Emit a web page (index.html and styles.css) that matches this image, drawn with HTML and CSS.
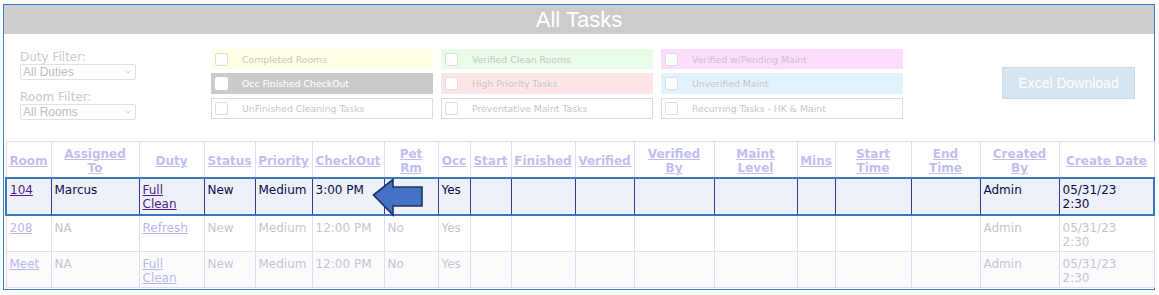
FILE: index.html
```html
<!DOCTYPE html>
<html>
<head>
<meta charset="utf-8">
<title>All Tasks</title>
<link rel="stylesheet" href="styles.css">
</head>
<body>
<div class="panel">
  <div class="title">All Tasks</div>
  <div class="filters">
    <div class="selects">
      <label class="flabel">Duty Filter:</label>
      <div class="sel">
        <select><option>All Duties</option></select>
        <svg class="chev" viewBox="0 0 6 4"><path d="M0.5 0.5 L3 3.2 L5.5 0.5" fill="none" stroke="#c8c8c8" stroke-width="0.9"/></svg>
      </div>
      <label class="flabel second">Room Filter:</label>
      <div class="sel">
        <select><option>All Rooms</option></select>
        <svg class="chev" viewBox="0 0 6 4"><path d="M0.5 0.5 L3 3.2 L5.5 0.5" fill="none" stroke="#c8c8c8" stroke-width="0.9"/></svg>
      </div>
    </div>
    <div class="legend">
      <div class="item yellow"><span class="box"></span>Completed Rooms</div>
      <div class="item green"><span class="box"></span>Verified Clean Rooms</div>
      <div class="item pink"><span class="box"></span>Verified w/Pending Maint</div>
      <div class="item gray"><span class="box"></span>Occ Finished CheckOut</div>
      <div class="item red"><span class="box"></span>High Priority Tasks</div>
      <div class="item blue"><span class="box"></span>Unverified Maint</div>
      <div class="item plain"><span class="box"></span>UnFinished Cleaning Tasks</div>
      <div class="item plain"><span class="box"></span>Preventative Maint Tasks</div>
      <div class="item plain"><span class="box"></span>Recurring Tasks - HK &amp; Maint</div>
    </div>
    <button class="excel">Excel Download</button>
  </div>
  <table class="tasks">
    <colgroup>
      <col style="width:45px"><col style="width:88px"><col style="width:65px"><col style="width:51px">
      <col style="width:57px"><col style="width:72px"><col style="width:54px"><col style="width:32px">
      <col style="width:41px"><col style="width:64px"><col style="width:59px"><col style="width:80px">
      <col style="width:83px"><col style="width:38px"><col style="width:76px"><col style="width:69px">
      <col style="width:79px"><col style="width:95px">
    </colgroup>
    <thead>
      <tr class="head">
        <th><a href="#">Room</a></th>
        <th><a href="#">Assigned</a><br><a href="#">To</a></th>
        <th><a href="#">Duty</a></th>
        <th><a href="#">Status</a></th>
        <th><a href="#">Priority</a></th>
        <th><a href="#">CheckOut</a></th>
        <th><a href="#">Pet</a><br><a href="#">Rm</a></th>
        <th><a href="#">Occ</a></th>
        <th><a href="#">Start</a></th>
        <th><a href="#">Finished</a></th>
        <th><a href="#">Verified</a></th>
        <th><a href="#">Verified</a><br><a href="#">By</a></th>
        <th><a href="#">Maint</a><br><a href="#">Level</a></th>
        <th><a href="#">Mins</a></th>
        <th><a href="#">Start</a><br><a href="#">Time</a></th>
        <th><a href="#">End</a><br><a href="#">Time</a></th>
        <th><a href="#">Created</a><br><a href="#">By</a></th>
        <th><a href="#">Create Date</a></th>
      </tr>
    </thead>
    <tbody>
      <tr class="r1 chosen">
        <td><a href="#">104</a></td><td>Marcus</td><td><a href="#">Full<br>Clean</a></td><td>New</td><td>Medium</td><td>3:00 PM</td><td></td><td>Yes</td>
        <td></td><td></td><td></td><td></td><td></td><td></td><td></td><td></td><td>Admin</td><td>05/31/23<br>2:30</td>
      </tr>
      <tr class="r2">
        <td><a href="#">208</a></td><td>NA</td><td><a href="#">Refresh</a></td><td>New</td><td>Medium</td><td>12:00 PM</td><td>No</td><td>Yes</td>
        <td></td><td></td><td></td><td></td><td></td><td></td><td></td><td></td><td>Admin</td><td>05/31/23<br>2:30</td>
      </tr>
      <tr class="r3 alt">
        <td><a href="#">Meet</a></td><td>NA</td><td><a href="#">Full<br>Clean</a></td><td>New</td><td>Medium</td><td>12:00 PM</td><td>No</td><td>Yes</td>
        <td></td><td></td><td></td><td></td><td></td><td></td><td></td><td></td><td>Admin</td><td>05/31/23<br>2:30</td>
      </tr>
    </tbody>
  </table>
  <svg class="arrow" viewBox="0 0 54 42" width="54" height="42">
    <polygon points="1.5,18 21,2.5 21,10 50,10 50,29 21,29 21,38" fill="#4472c4" stroke="#1f3560" stroke-width="1.6" stroke-linejoin="miter"/>
  </svg>
</div>
</body>
</html>
```

FILE: styles.css
```css
body {
  margin: 0;
  background: #ffffff;
  font-family: "DejaVu Sans", Verdana, sans-serif;
}

.panel {
  position: relative;
  width: 1150px;
  margin: 4px 0 0 3px;
  border: 1px solid #3b7fcc;
  padding-bottom: 1px;
}

.title {
  height: 29px;
  line-height: 29px;
  background: #cccccc;
  color: #ffffff;
  text-align: center;
  font-family: "Liberation Sans", Arial, sans-serif;
  font-size: 22px;
}

.filters {
  display: flex;
  align-items: flex-start;
  height: 107px;
  box-sizing: border-box;
  padding: 15px 0 0 16px;
}

.selects {
  width: 116px;
  padding-top: 1px;
  display: flex;
  flex-direction: column;
}

.flabel {
  font-size: 12px;
  line-height: 14px;
  color: #c9c9c9;
}

.flabel.second {
  margin-top: 11px;
  line-height: 13px;
}

.sel {
  position: relative;
  height: 16px;
}

.sel select {
  appearance: none;
  -webkit-appearance: none;
  display: block;
  width: 116px;
  height: 16px;
  box-sizing: border-box;
  border: 1px solid #e1e1e1;
  border-radius: 2px;
  background: #ffffff;
  font-family: "Liberation Sans", Arial, sans-serif;
  font-size: 12px;
  line-height: 14px;
  color: #bdbdbd;
  padding: 0 0 0 2px;
  margin: 0;
}

.chev {
  position: absolute;
  right: 5px;
  top: 6px;
  width: 6px;
  height: 4px;
}

.legend {
  display: grid;
  grid-template-columns: 222px 212px 242px;
  grid-template-rows: 20px 21px 21px;
  column-gap: 8px;
  row-gap: 4px;
  margin-left: 75px;
}

.item {
  display: flex;
  align-items: center;
  box-sizing: border-box;
  border: 1px solid transparent;
  padding-left: 3px;
  font-size: 9.3px;
  color: #c6c6c6;
  white-space: nowrap;
}

.box {
  flex: none;
  width: 13px;
  height: 13px;
  box-sizing: border-box;
  border: 1px solid #dedede;
  border-radius: 2px;
  background: #ffffff;
  margin-right: 14px;
}

.yellow { background: #ffffe3; border-color: #ffffe3; }
.green { background: #e8fce8; border-color: #e8fce8; }
.pink { background: #fedcfe; border-color: #fedcfe; }
.red { background: #ffe6e6; border-color: #ffe6e6; }
.blue { background: #e3f3fd; border-color: #e3f3fd; }
.plain { background: #ffffff; border-color: #dcdcdc; }
.gray { background: #cbcbcb; border-color: #cbcbcb; color: #ffffff; }
.gray .box { border-color: #ffffff; }

.excel {
  margin: 18px 0 0 99px;
  width: 133px;
  height: 32px;
  background: #d5e5f2;
  border: 1px solid #cddbe7;
  color: #ffffff;
  font-family: "Liberation Sans", Arial, sans-serif;
  font-size: 14px;
  padding: 0;
}

.tasks {
  width: 1148px;
  margin-left: 1px;
  table-layout: fixed;
  border-collapse: collapse;
  font-size: 12px;
  line-height: 14px;
}

.tasks th,
.tasks td {
  border: 1px solid #dedef0;
  overflow: hidden;
  white-space: nowrap;
}

.tasks th {
  font-weight: bold;
  text-align: center;
  vertical-align: middle;
  padding: 4px 1px 0;
  background: #ffffff;
}

.tasks th a {
  color: #bfbff2;
  text-decoration: underline;
}

.tasks td {
  vertical-align: top;
  text-align: left;
  padding: 4px 3px 2px;
  color: #c6c6ce;
  background: #ffffff;
}

.tasks td a {
  color: #b9b9ef;
  text-decoration: underline;
}

.head { height: 36px; }
.r1 { height: 37px; }
.r2 { height: 36px; }
.r3 { height: 36px; }

.tasks tr.r2 td,
.tasks tr.r3 td { padding-top: 5px; }

.tasks tr.alt td { background: #fbfbfe; }

.tasks tr.chosen td {
  background: #edf1fa;
  color: #0b0b4e;
  border-top: 2px solid #3b78b7;
  border-bottom: 2px solid #3b78b7;
  border-left: 1px solid #3838a0;
  border-right: 1px solid #3838a0;
}

.tasks tr.chosen td:first-child { border-left: 2px solid #3b78b7; }
.tasks tr.chosen td:last-child { border-right: 2px solid #3b78b7; }
.tasks tr.chosen td a { color: #551a8b; }

.arrow {
  position: absolute;
  left: 368px;
  top: 172px;
}
```
